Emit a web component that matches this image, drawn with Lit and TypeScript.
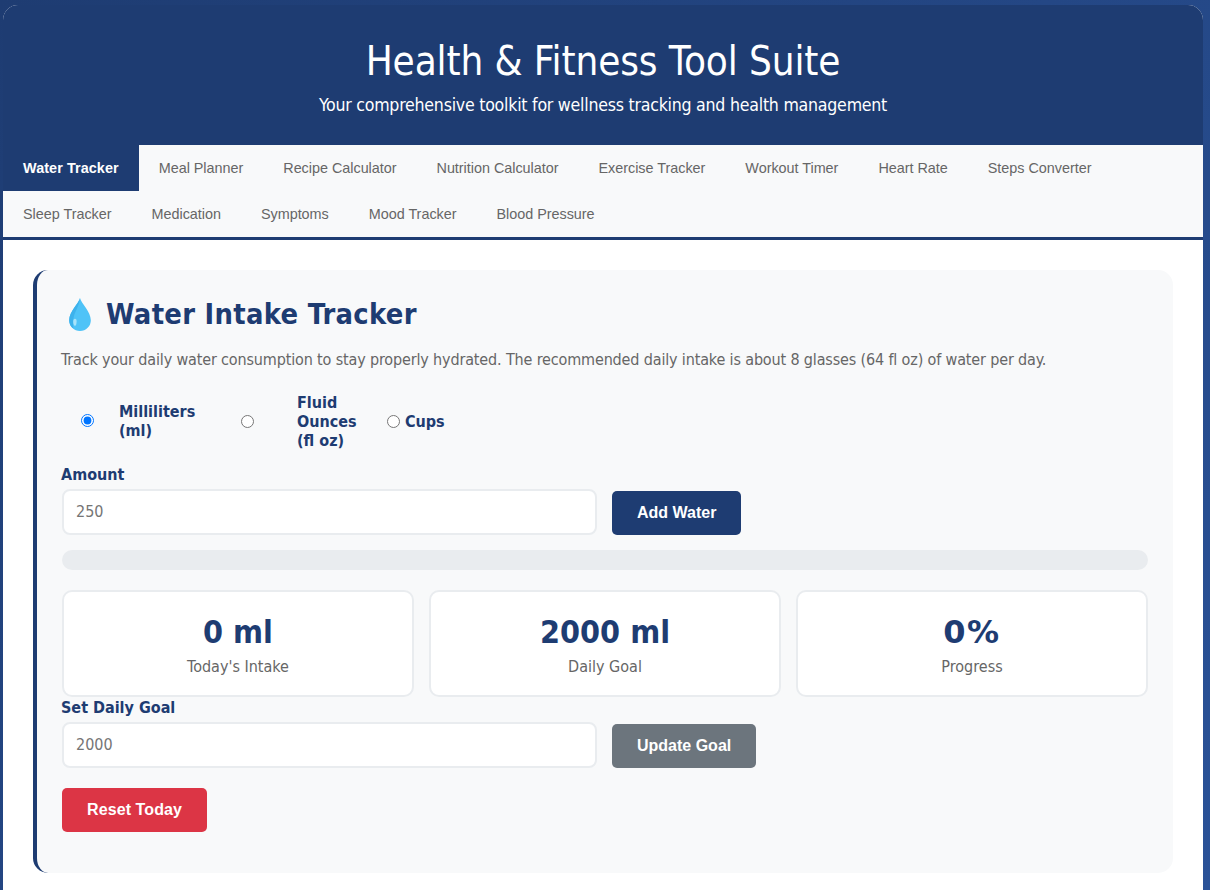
import { html, css, LitElement } from "lit";
import { customElement, state } from "lit/decorators.js";

const TABS = [
  "Water Tracker", "Meal Planner", "Recipe Calculator", "Nutrition Calculator",
  "Exercise Tracker", "Workout Timer", "Heart Rate", "Steps Converter",
  "Sleep Tracker", "Medication", "Symptoms", "Mood Tracker", "Blood Pressure",
];

@customElement("app-root")
export class AppRoot extends LitElement {
  @state() active = 0;

  render() {
    return html`
      <div class="container">
        <header>
          <h1>Health &amp; Fitness Tool Suite</h1>
          <p>Your comprehensive toolkit for wellness tracking and health management</p>
        </header>
        <nav>
          ${TABS.map(
            (t, i) => html`<button class="tab ${i === this.active ? "active" : ""}" @click=${() => (this.active = i)}>${t}</button>`
          )}
        </nav>
        <main>
          <section class="card">
            <h2>
              <svg class="drop" viewBox="0 0 21 32" aria-hidden="true">
                <path fill="#4fc3f7" d="M10.500 0C9.500 5 0 13 0 21.500a10.500 10.500 0 0 0 21 0C21 13 11.500 5 10.500 0Z" />
                <path fill="#3db2ec" d="M10.500 0C9.500 5 0 13 0 21.500c0 3.500 1.700 6.500 4.300 8.400C3 25 4 17 6.500 12.500 8.500 8.500 10 5 10.500 0Z" />
                <path fill="#a8e3fa" d="M4.200 21c1.300-1.800 3-1 3 1.300 0 2.700-.5 4.700-1.500 4.700S3.300 24 4.200 21Z" />
              </svg>
              Water Intake Tracker
            </h2>
            <p class="intro">Track your daily water consumption to stay properly hydrated. The recommended daily intake is about 8 glasses (64 fl oz) of water per day.</p>

            <div class="units">
              <input class="slot-a" type="radio" name="unit" checked />
              <label class="label-a">Milliliters (ml)</label>
              <input class="slot-b" type="radio" name="unit" />
              <label class="label-b">Fluid Ounces (fl oz)</label>
              <input class="slot-c" type="radio" name="unit" />
              <label>Cups</label>
            </div>

            <label class="field">Amount</label>
            <div class="entry">
              <input class="text" type="number" placeholder="250" />
              <button class="btn primary">Add Water</button>
            </div>

            <div class="progress"></div>

            <div class="stats">
              <div class="stat"><div class="value">0 ml</div><div class="name">Today's Intake</div></div>
              <div class="stat"><div class="value">2000 ml</div><div class="name">Daily Goal</div></div>
              <div class="stat"><div class="value percent">0%</div><div class="name">Progress</div></div>
            </div>

            <label class="field tight">Set Daily Goal</label>
            <div class="entry">
              <input class="text" type="number" placeholder="2000" />
              <button class="btn secondary">Update Goal</button>
            </div>

            <button class="btn danger">Reset Today</button>
          </section>
        </main>
      </div>
    `;
  }

  static styles = css`
    :host {
      display: block;
      height: 890px;
      overflow: hidden;
      background: linear-gradient(135deg, #1e3c72, #2a5298);
      font-family: "DejaVu Sans Condensed", "DejaVu Sans", sans-serif;
      padding: 5px 7px 0 3px;
      box-sizing: border-box;
    }
    .container {
      width: 1200px;
      background: #fff;
      border-radius: 15px 15px 0 0;
      overflow: hidden;
    }
    header {
      background: #1e3c72;
      color: #fff;
      text-align: center;
      height: 140px;
      padding-top: 33px;
      box-sizing: border-box;
    }
    h1 {
      margin: 0 0 10px;
      font-size: 40px;
      font-weight: 400;
      line-height: 47px;
      letter-spacing: -0.1px;
    }
    header p {
      margin: 0;
      font-size: 17.6px;
      line-height: 20px;
      letter-spacing: -0.24px;
    }
    nav {
      display: flex;
      flex-wrap: wrap;
      background: #f8f9fa;
      border-bottom: 3px solid #1e3c72;
    }
    .tab {
      border: none;
      background: none;
      padding: 15px 20px;
      font: 14.4px/16px "Liberation Sans", sans-serif;
      letter-spacing: -0.02px;
      color: #666;
      cursor: pointer;
    }
    .tab.active {
      background: #1e3c72;
      color: #fff;
      font-weight: 700;
      letter-spacing: 0.08px;
    }
    main {
      padding: 30px;
    }
    .card {
      background: #f8f9fa;
      border-left: 4px solid #1e3c72;
      border-radius: 15px;
      padding: 26px 25px 25px;
      height: 603px;
      box-sizing: border-box;
    }
    h2 {
      margin: 0 0 18px;
      display: flex;
      align-items: center;
      gap: 15px;
      color: #1e3c72;
      font-size: 28.8px;
      line-height: 36px;
      font-weight: 700;
      letter-spacing: 0.3px;
    }
    .drop {
      width: 22px;
      height: 33px;
      margin-left: 7px;
      flex: none;
    }
    .intro {
      margin: 0 0 24px -1px;
      color: #666;
      font-size: 16px;
      line-height: 19px;
      letter-spacing: -0.15px;
    }
    .units {
      display: flex;
      align-items: center;
      color: #1e3c72;
      font-weight: 700;
      font-size: 16px;
      line-height: 19px;
    }
    .units input {
      margin: 0;
      flex: none;
    }
    .slot-a { margin: 0 25px 2px 19px !important; }
    .slot-b { margin-left: 37px !important; margin-right: 43px !important; }
    .slot-c { margin-left: 15px !important; margin-right: 5px !important; }
    .label-a { width: 85px; margin-bottom: 2px; }
    .label-b { width: 75px; }
    .field {
      display: block;
      margin: 15px 0 5px -1px;
      color: #1e3c72;
      font-size: 16px;
      line-height: 19px;
      font-weight: 700;
    }
    .field.tight {
      margin-top: 1px;
    }
    .entry {
      display: flex;
      align-items: flex-end;
      gap: 15px;
    }
    .text {
      width: 535px;
      height: 46px;
      box-sizing: border-box;
      border: 2px solid #e9ecef;
      border-radius: 8px;
      padding: 10px 12px 12px;
      background: #fff;
      font: 16px "DejaVu Sans Condensed", "DejaVu Sans", sans-serif;
      outline: none;
    }
    .text::placeholder {
      color: #757575;
    }
    .btn {
      border: none;
      border-radius: 5px;
      height: 44px;
      padding: 0 25px;
      color: #fff;
      font: 700 16px/18px "Liberation Sans", sans-serif;
      cursor: pointer;
    }
    .primary { background: #1e3c72; }
    .secondary { background: #6c757d; }
    .danger {
      background: #dc3545;
      margin-top: 20px;
      display: block;
      letter-spacing: 0.1px;
    }
    .progress {
      height: 20px;
      margin: 15px 0 20px;
      background: #e9ecef;
      border-radius: 10px;
    }
    .stats {
      display: grid;
      grid-template-columns: repeat(3, 1fr);
      gap: 15px;
    }
    .stat {
      background: #fff;
      border: 2px solid #e9ecef;
      border-radius: 10px;
      padding: 21px 20px 0;
      height: 107px;
      box-sizing: border-box;
      text-align: center;
    }
    .value {
      color: #1e3c72;
      font-size: 32px;
      line-height: 38px;
      font-weight: 700;
      margin-bottom: 6px;
    }
    .value.percent {
      font-family: "DejaVu Sans", sans-serif;
      letter-spacing: 1.5px;
    }
    .name {
      color: #666;
      font-size: 16px;
      line-height: 19px;
    }
  `;
}
